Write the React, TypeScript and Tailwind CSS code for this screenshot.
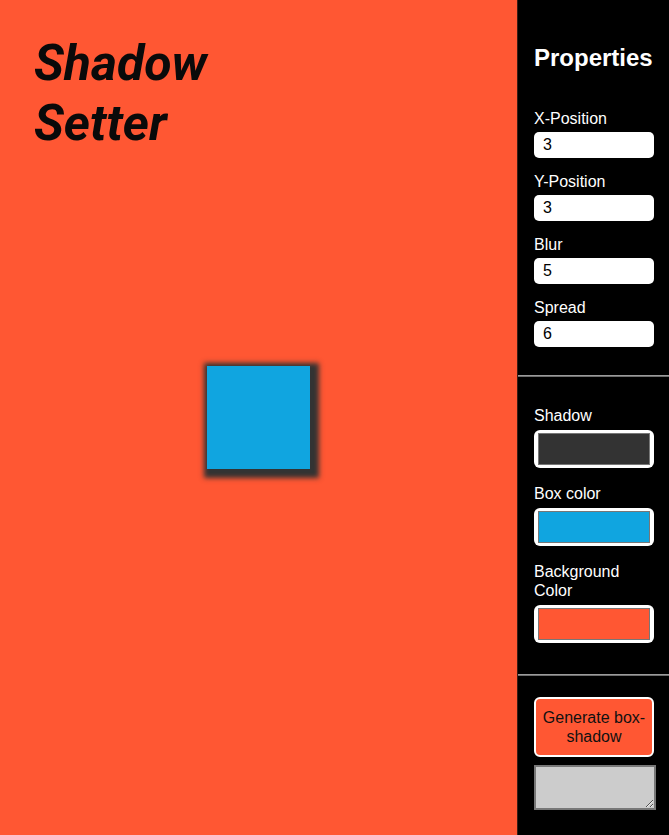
import React from "react";

function NumField({ label, value }: { label: string; value: string }) {
  return (
    <div className="flex flex-col">
      <label className="text-[16px] leading-[18px] text-white">{label}</label>
      <input
        readOnly
        value={value}
        className="mt-[4px] h-[26px] w-[120px] rounded-[5px] bg-white px-[9px] text-[16px] text-black outline-none"
        style={{ fontFamily: '"Liberation Sans", Arial, sans-serif' }}
      />
    </div>
  );
}

function ColorField({ label, color }: { label: React.ReactNode; color: string }) {
  return (
    <div className="flex flex-col">
      <div className="text-[16px] leading-[19px] text-white">{label}</div>
      <div className="mt-[5px] h-[38px] w-[120px] rounded-[6px] bg-white px-[4px] py-[3px]">
        <div className="h-full w-full border border-[#777]" style={{ backgroundColor: color }} />
      </div>
    </div>
  );
}

export default function App() {
  return (
    <div
      className="flex h-[835px] w-[669px] overflow-hidden"
      style={{ fontFamily: '"Liberation Sans", Arial, sans-serif' }}
    >
      <div className="relative flex h-full w-[517px] flex-col bg-[#ff5733]">
        <h1
          className="pl-[34px] pt-[33px] text-[50px] font-bold italic leading-[60px] text-[#0a0a0a]"
          style={{ fontFamily: 'Roboto, "Liberation Sans", sans-serif' }}
        >
          Shadow
          <br />
          Setter
        </h1>
        <div className="absolute inset-0 flex items-center justify-center">
          <div
            className="h-[103px] w-[103px] bg-[#10a5e0]"
            style={{ boxShadow: "3px 3px 5px 6px #333333" }}
          />
        </div>
      </div>
      <div className="flex h-full w-[152px] flex-col border-l border-[#3a1c14] bg-black">
        <div className="pl-[16px]">
          <h2 className="pt-[44px] text-[24px] font-bold leading-[28px] text-white">Properties</h2>
          <div className="mt-[38px] flex flex-col gap-[15px]">
            <NumField label="X-Position" value="3" />
            <NumField label="Y-Position" value="3" />
            <NumField label="Blur" value="5" />
            <NumField label="Spread" value="6" />
          </div>
        </div>
        <div className="mt-[28px] h-[2px] w-full border-t border-[#9a9a9a] bg-[#6e6e6e]" />
        <div className="flex flex-col gap-[16px] pl-[16px] pt-[29px]">
          <ColorField label="Shadow" color="#333333" />
          <ColorField label="Box color" color="#10a5e0" />
          <ColorField
            label={
              <>
                Background
                <br />
                Color
              </>
            }
            color="#ff5733"
          />
        </div>
        <div className="mt-[31px] h-[2px] w-full border-t border-[#9a9a9a] bg-[#6e6e6e]" />
        <div className="flex flex-col gap-[8px] pl-[16px] pt-[21px]">
          <button className="w-[120px] rounded-[6px] border-2 border-white bg-[#ff5733] py-[9px] text-[16px] leading-[19px] text-[#111]">
            Generate box-shadow
          </button>
          <textarea
            readOnly
            className="h-[45px] w-[122px] border-2 border-[#777] bg-[#cccccc] outline-none"
          />
        </div>
      </div>
    </div>
  );
}
